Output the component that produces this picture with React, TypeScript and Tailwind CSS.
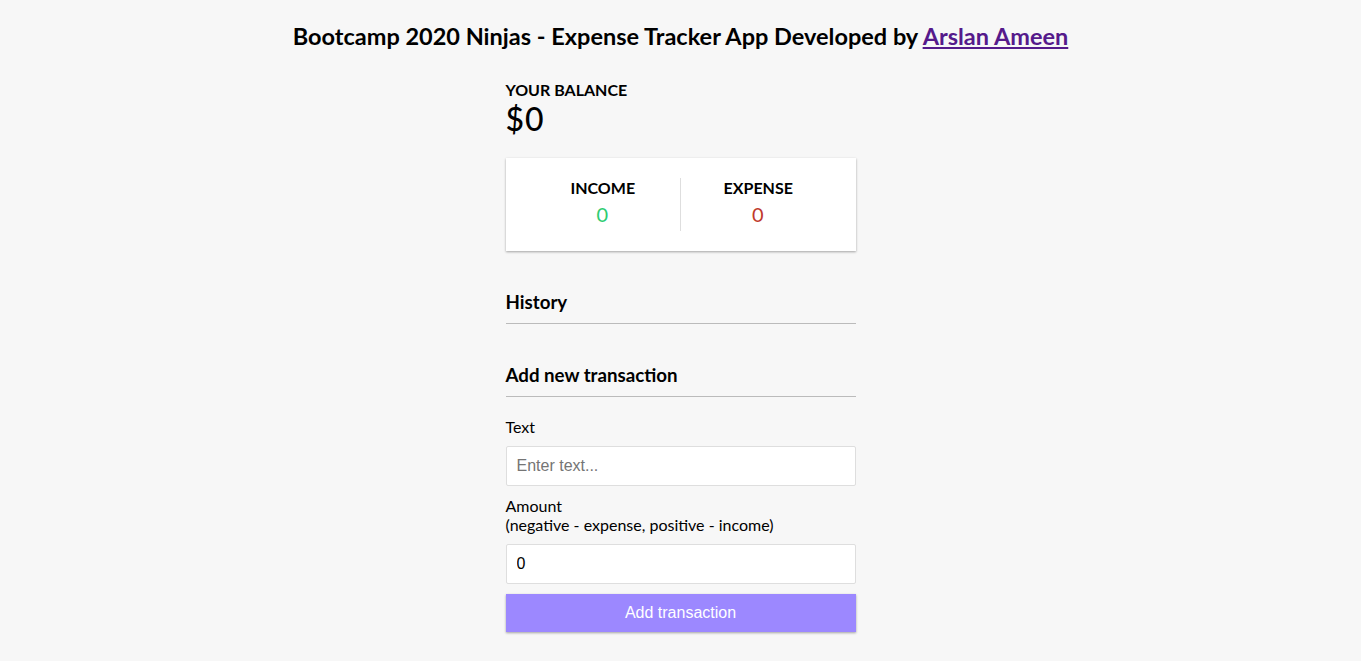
import React, { useState } from "react";

const cardShadow = "shadow-[0_1px_3px_rgba(0,0,0,0.12),0_1px_2px_rgba(0,0,0,0.24)]";

const App = () => {
  const [text, setText] = useState("");
  const [amount, setAmount] = useState("0");

  return (
    <div className="min-h-screen bg-[#f7f7f7] text-black font-['Lato',sans-serif] leading-[normal]">
      <h2 className="pt-[22px] text-center text-[23.5px] font-bold m-0">
        Bootcamp 2020 Ninjas - Expense Tracker App Developed by{" "}
        <a href="#" className="text-[#551a8b] underline">
          Arslan Ameen
        </a>
      </h2>

      <div className="w-[350px] mx-auto mt-[30px]">
        {/* Balance */}
        <h4 className="text-[16px] font-bold m-0">YOUR BALANCE</h4>
        <h1 className="text-[32px] font-medium tracking-[1px] m-0">$0</h1>

        {/* Income / Expense */}
        <div className={`bg-white p-5 mt-5 flex ${cardShadow}`}>
          <div className="flex-1 text-center border-r border-[#dedede]">
            <h4 className="text-[16px] font-bold uppercase">Income</h4>
            <p className="text-[20px] tracking-[1px] my-[5px] text-[#2ecc71]">0</p>
          </div>
          <div className="flex-1 text-center">
            <h4 className="text-[16px] font-bold uppercase">Expense</h4>
            <p className="text-[20px] tracking-[1px] my-[5px] text-[#c0392b]">0</p>
          </div>
        </div>

        {/* History */}
        <h3 className="text-[18.72px] font-bold mt-10 pb-[10px] border-b border-[#bbb]">History</h3>
        <ul className="list-none p-0" />

        {/* Form */}
        <h3 className="text-[18.72px] font-bold mt-10 pb-[10px] border-b border-[#bbb]">
          Add new transaction
        </h3>
        <form className="mt-[10px]" onSubmit={(e) => e.preventDefault()}>
          <div>
            <label className="inline-block my-[10px] text-[16px]">Text</label>
            <input
              type="text"
              value={text}
              onChange={(e) => setText(e.target.value)}
              placeholder="Enter text..."
              className="block w-full h-10 bg-white border border-[#dedede] rounded-[2px] px-[10px] text-[16px] font-['Liberation_Sans',Arial,sans-serif] placeholder:text-[#757575] outline-none"
            />
          </div>
          <div>
            <label className="inline-block my-[10px] text-[16px]">
              Amount <br />
              (negative - expense, positive - income)
            </label>
            <input
              type="number"
              value={amount}
              onChange={(e) => setAmount(e.target.value)}
              placeholder="Enter amount..."
              className="block w-full h-10 bg-white border border-[#dedede] rounded-[2px] px-[10px] text-[16px] font-['Liberation_Sans',Arial,sans-serif] outline-none"
            />
          </div>
          <button
            className={`block w-full bg-[#9c88ff] text-white text-[16px] font-['Liberation_Sans',Arial,sans-serif] leading-[normal] p-[10px] mt-[10px] mb-[30px] ${cardShadow}`}
          >
            Add transaction
          </button>
        </form>
      </div>
    </div>
  );
};

export default App;
